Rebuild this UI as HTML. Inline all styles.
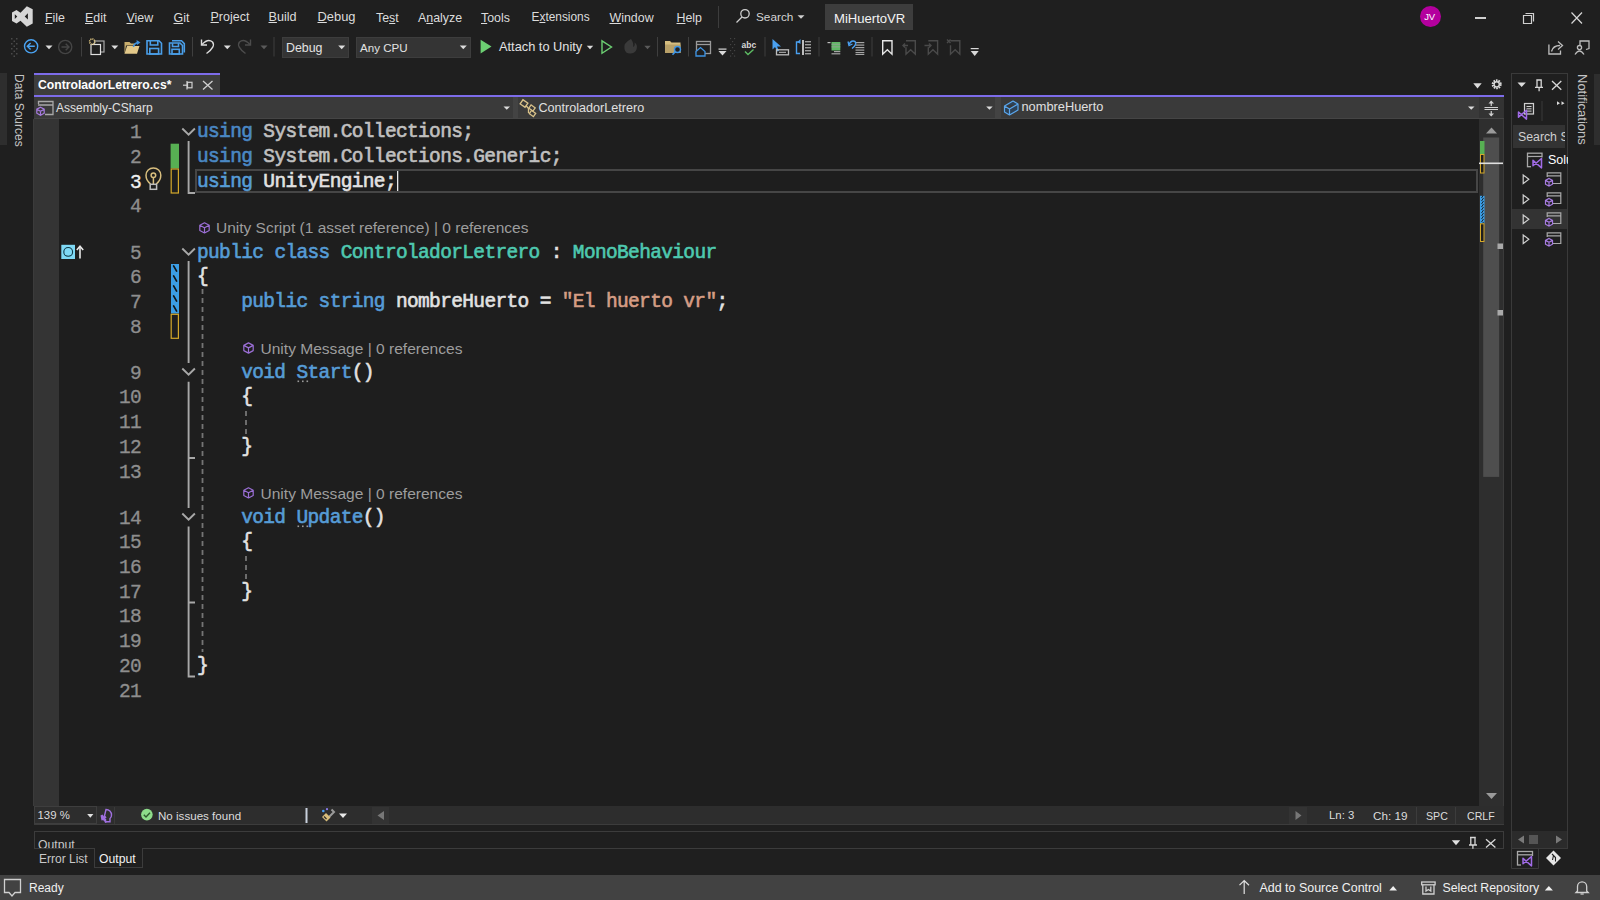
<!DOCTYPE html>
<html><head><meta charset="utf-8">
<style>
*{box-sizing:border-box;margin:0;padding:0}
html,body{width:1600px;height:900px;overflow:hidden;background:#1f1f1f;font-family:"Liberation Sans",sans-serif;color:#d6d6d6}
.a{position:absolute}
.t{position:absolute;white-space:pre;font-size:12.5px;line-height:16px;color:#d8d8d8}
.menu{top:9px}
.menu u{text-decoration:none;border-bottom:1px solid #bbb}
.sep{position:absolute;width:1px;background:#3d3d3d}
svg{position:absolute;overflow:visible}
/* code */
.ln{position:absolute;left:99px;width:42px;text-align:right;font:19.5px/24.7px "Liberation Mono",monospace;letter-spacing:-0.65px;color:#8e8e8e;-webkit-text-stroke:0.3px currentColor}
.ln.cur{color:#f0f0f0}
.cl{position:absolute;left:197px;white-space:pre;font:19.5px/24.7px "Liberation Mono",monospace;letter-spacing:-0.65px;color:#dcdcdc;-webkit-text-stroke:0.6px currentColor;margin-top:-1px}
.kw{color:#569cd6}.kwd{color:#4a88c4}.dim{color:#c0c0c0}.id{color:#e2e2e2}.ty{color:#4ec9b0}.st{color:#d69d85}.fn{color:#569cd6}
.lens{position:absolute;white-space:pre;font:15.5px/21.4px "Liberation Sans",sans-serif;color:#9d9d9d}
</style></head><body>
<div class="a" style="left:825px;top:4px;width:88px;height:26px;background:#3d3d3d;"></div>
<div class="a" style="left:1420px;top:6px;width:21px;height:21px;background:#b4009e;border-radius:50%;"></div>
<div class="a" style="left:1475px;top:17px;width:10.5px;height:1.5px;background:#d0d0d0;"></div>
<div class="a" style="left:718px;top:6px;width:1px;height:22px;background:#3d3d3d;"></div>
<div class="a" style="left:281.5px;top:36.5px;width:67.5px;height:21.5px;background:#343434;border:1px solid #3d3d3d;"></div>
<div class="a" style="left:356px;top:36.5px;width:115px;height:21.5px;background:#343434;border:1px solid #3d3d3d;"></div>
<div class="a" style="left:0px;top:73px;width:7px;height:72px;background:#2e2e2e;"></div>
<div class="a" style="left:34px;top:73px;width:186px;height:22px;background:#3d3d3d;border-top:2px solid #7d6cea;"></div>
<div class="a" style="left:34px;top:95px;width:1470px;height:2px;background:#7d6cea;"></div>
<div class="a" style="left:34px;top:97px;width:1470px;height:22px;background:#3a3a3a;border-bottom:1px solid #454545;"></div>
<div class="a" style="left:513px;top:97px;width:5px;height:21px;background:#434343;"></div>
<div class="a" style="left:995px;top:97px;width:6px;height:21px;background:#434343;"></div>
<div class="a" style="left:1479px;top:97px;width:25px;height:21px;background:#333333;"></div>
<div class="a" style="left:34px;top:119px;width:1445px;height:687px;background:#1e1e1e;"></div>
<div class="a" style="left:33px;top:119px;width:26px;height:687px;background:#343434;border-left:1px solid #3b3b3b;"></div>
<div class="a" style="left:1479px;top:119px;width:25px;height:687px;background:#2e2e2e;"></div>
<div class="a" style="left:195px;top:169px;width:1283px;height:24px;border:2px solid #464646;"></div>
<div class="a" style="left:34px;top:806px;width:1470px;height:19px;background:#2d2d2d;border-bottom:1px solid #3c3c3c;"></div>
<div class="a" style="left:34px;top:806px;width:63px;height:18px;background:#2d2d2d;border:1px solid #3e3e3e;"></div>
<div class="a" style="left:97px;top:807px;width:18px;height:17px;border-right:1px solid #3a3a3a;"></div>
<div class="a" style="left:372px;top:807px;width:17px;height:17px;background:#333333;"></div>
<div class="a" style="left:1289px;top:807px;width:18px;height:17px;background:#333333;"></div>
<div class="a" style="left:1416px;top:807px;width:40px;height:17px;border-left:1px solid #3c3c3c;border-right:1px solid #3c3c3c;"></div>
<div class="a" style="left:34px;top:831px;width:1470px;height:18px;border:1px solid #3c3c3c;border-bottom:none;"></div>
<div class="a" style="left:34px;top:848px;width:1470px;height:1px;background:#3c3c3c;"></div>
<div class="a" style="left:94px;top:848px;width:49px;height:20px;background:#1f1f1f;border:1px solid #3c3c3c;border-top:none;"></div>
<div class="a" style="left:1511px;top:73px;width:57px;height:776px;border:1px solid #3a3a3a;"></div>
<div class="a" style="left:1513px;top:125px;width:52px;height:23px;background:#333333;"></div>
<div class="a" style="left:1512px;top:209px;width:55px;height:20px;background:#333333;"></div>
<div class="a" style="left:1594px;top:73.5px;width:6px;height:71px;background:#2e2e2e;"></div>
<div class="a" style="left:0px;top:875px;width:1600px;height:25px;background:#424242;"></div>
<div class="t" style="left:45px;top:11.50px;font-size:12.4px;line-height:12.4px;color:#dcdcdc;"><u>F</u>ile</div>
<div class="t" style="left:85px;top:11.50px;font-size:12.4px;line-height:12.4px;color:#dcdcdc;"><u>E</u>dit</div>
<div class="t" style="left:126.5px;top:11.50px;font-size:12.4px;line-height:12.4px;color:#dcdcdc;"><u>V</u>iew</div>
<div class="t" style="left:173.5px;top:11.50px;font-size:12.4px;line-height:12.4px;color:#dcdcdc;"><u>G</u>it</div>
<div class="t" style="left:210.5px;top:11.42px;font-size:12.5px;line-height:12.5px;color:#dcdcdc;"><u>P</u>roject</div>
<div class="t" style="left:268.5px;top:11.33px;font-size:12.6px;line-height:12.6px;color:#dcdcdc;"><u>B</u>uild</div>
<div class="t" style="left:317.5px;top:11.08px;font-size:12.9px;line-height:12.9px;color:#dcdcdc;"><u>D</u>ebug</div>
<div class="t" style="left:376px;top:11.50px;font-size:12.4px;line-height:12.4px;color:#dcdcdc;">Te<u>s</u>t</div>
<div class="t" style="left:418px;top:11.50px;font-size:12.4px;line-height:12.4px;color:#dcdcdc;">A<u>n</u>alyze</div>
<div class="t" style="left:481px;top:11.50px;font-size:12.4px;line-height:12.4px;color:#dcdcdc;"><u>T</u>ools</div>
<div class="t" style="left:531.5px;top:11.93px;font-size:11.9px;line-height:11.9px;color:#dcdcdc;">E<u>x</u>tensions</div>
<div class="t" style="left:609.5px;top:11.50px;font-size:12.4px;line-height:12.4px;color:#dcdcdc;"><u>W</u>indow</div>
<div class="t" style="left:676.5px;top:11.50px;font-size:12.4px;line-height:12.4px;color:#dcdcdc;"><u>H</u>elp</div>
<div class="t" style="left:756px;top:11.61px;font-size:11.8px;line-height:11.8px;color:#d4d4d4;">Search</div>
<div class="t" style="left:834px;top:11.51px;font-size:13.1px;line-height:13.1px;color:#f4f4f4;">MiHuertoVR</div>
<div class="t" style="left:1424.3px;top:12.26px;font-size:9.5px;line-height:9.5px;color:#ffffff;letter-spacing:-0.3px;">JV</div>
<div class="t" style="left:286px;top:41.50px;font-size:12.4px;line-height:12.4px;color:#e2e2e2;">Debug</div>
<div class="t" style="left:360px;top:42.18px;font-size:11.6px;line-height:11.6px;color:#e2e2e2;">Any CPU</div>
<div class="t" style="left:499px;top:41.16px;font-size:12.8px;line-height:12.8px;color:#e2e2e2;">Attach to Unity</div>
<div class="t" style="left:25px;top:63.84px;font-size:12.0px;line-height:12.0px;color:#c4c4c4;transform:rotate(90deg);transform-origin:0 0;top:74px;">Data Sources</div>
<div class="t" style="left:38px;top:78.67px;font-size:12.2px;line-height:12.2px;color:#ffffff;font-weight:bold;">ControladorLetrero.cs*</div>
<div class="t" style="left:56px;top:102.14px;font-size:12.0px;line-height:12.0px;color:#e0e0e0;">Assembly-CSharp</div>
<div class="t" style="left:538.5px;top:101.63px;font-size:12.6px;line-height:12.6px;color:#e0e0e0;">ControladorLetrero</div>
<div class="t" style="left:1021.5px;top:101.46px;font-size:12.8px;line-height:12.8px;color:#e0e0e0;">nombreHuerto</div>
<div class="t" style="left:37.5px;top:810.05px;font-size:11.4px;line-height:11.4px;color:#dcdcdc;">139 %</div>
<div class="t" style="left:158px;top:809.88px;font-size:11.6px;line-height:11.6px;color:#dcdcdc;">No issues found</div>
<div class="t" style="left:1329px;top:810.05px;font-size:11.4px;line-height:11.4px;color:#dcdcdc;">Ln: 3</div>
<div class="t" style="left:1373px;top:809.80px;font-size:11.7px;line-height:11.7px;color:#dcdcdc;">Ch: 19</div>
<div class="t" style="left:1426px;top:810.73px;font-size:10.6px;line-height:10.6px;color:#dcdcdc;">SPC</div>
<div class="t" style="left:1467px;top:810.73px;font-size:10.6px;line-height:10.6px;color:#dcdcdc;">CRLF</div>
<div class="t" style="left:38px;top:838.87px;font-size:12.2px;line-height:12.2px;color:#c8c8c8;height:9.4px;overflow:hidden;">Output</div>
<div class="t" style="left:39px;top:852.84px;font-size:12.0px;line-height:12.0px;color:#c8c8c8;">Error List</div>
<div class="t" style="left:99px;top:852.67px;font-size:12.2px;line-height:12.2px;color:#f2f2f2;">Output</div>
<div class="t" style="left:1518px;top:131.39px;font-size:12.3px;line-height:12.3px;color:#d0d0d0;width:47px;overflow:hidden;">Search S</div>
<div class="t" style="left:1548px;top:153.92px;font-size:12.5px;line-height:12.5px;color:#ffffff;width:19.5px;overflow:hidden;">Solu</div>
<div class="t" style="left:1589px;top:62.80px;font-size:13.0px;line-height:13.0px;color:#c4c4c4;transform:rotate(90deg);transform-origin:0 0;top:73.8px;">Notifications</div>
<div class="t" style="left:29px;top:881.84px;font-size:12.0px;line-height:12.0px;color:#f0f0f0;">Ready</div>
<div class="t" style="left:1259.5px;top:881.76px;font-size:12.45px;line-height:12.45px;color:#f0f0f0;">Add to Source Control</div>
<div class="t" style="left:1442.5px;top:881.85px;font-size:12.35px;line-height:12.35px;color:#f0f0f0;">Select Repository</div><div class="ln" style="top:121.3px">1</div>
<div class="cl" style="top:121.3px"><span class="kwd">using</span> <span class="dim">System.Collections;</span></div>
<div class="ln" style="top:146.0px">2</div>
<div class="cl" style="top:146.0px"><span class="kwd">using</span> <span class="dim">System.Collections.Generic;</span></div>
<div class="ln cur" style="top:170.7px">3</div>
<div class="cl" style="top:170.7px"><span class="kw">using</span> <span class="id">UnityEngine;</span></div>
<div class="ln" style="top:195.4px">4</div>
<div class="ln" style="top:241.5px">5</div>
<div class="cl" style="top:241.5px"><span class="kw">public</span> <span class="kw">class</span> <span class="ty">ControladorLetrero</span> <span class="id">:</span> <span class="ty">MonoBehaviour</span></div>
<div class="ln" style="top:266.2px">6</div>
<div class="cl" style="top:266.2px"><span class="id">{</span></div>
<div class="ln" style="top:290.9px">7</div>
<div class="cl" style="top:290.9px">    <span class="kw">public</span> <span class="kw">string</span> <span class="id">nombreHuerto = </span><span class="st">"El huerto vr"</span><span class="id">;</span></div>
<div class="ln" style="top:315.6px">8</div>
<div class="ln" style="top:361.7px">9</div>
<div class="cl" style="top:361.7px">    <span class="kw">void</span> <span class="fn">Start</span><span class="id">()</span></div>
<div class="ln" style="top:386.4px">10</div>
<div class="cl" style="top:386.4px">    <span class="id">{</span></div>
<div class="ln" style="top:411.1px">11</div>
<div class="ln" style="top:435.8px">12</div>
<div class="cl" style="top:435.8px">    <span class="id">}</span></div>
<div class="ln" style="top:460.5px">13</div>
<div class="ln" style="top:506.6px">14</div>
<div class="cl" style="top:506.6px">    <span class="kw">void</span> <span class="fn">Update</span><span class="id">()</span></div>
<div class="ln" style="top:531.3px">15</div>
<div class="cl" style="top:531.3px">    <span class="id">{</span></div>
<div class="ln" style="top:556.0px">16</div>
<div class="ln" style="top:580.7px">17</div>
<div class="cl" style="top:580.7px">    <span class="id">}</span></div>
<div class="ln" style="top:605.4px">18</div>
<div class="ln" style="top:630.1px">19</div>
<div class="ln" style="top:654.8px">20</div>
<div class="cl" style="top:654.8px"><span class="id">}</span></div>
<div class="ln" style="top:679.5px">21</div>
<div class="t" style="left:216px;top:220.48px;font-size:15.5px;line-height:15.5px;color:#9d9d9d;">Unity Script (1 asset reference) <span class="bar">|</span> 0 references</div>
<div class="t" style="left:260.5px;top:340.64px;font-size:15.55px;line-height:15.55px;color:#9d9d9d;">Unity Message <span class="bar">|</span> 0 references</div>
<div class="t" style="left:260.5px;top:485.54px;font-size:15.55px;line-height:15.55px;color:#9d9d9d;">Unity Message <span class="bar">|</span> 0 references</div><svg style="left:0;top:0" width="1600" height="900" viewBox="0 0 1600 900">
<!-- title bar -->
<path d="M12 12.5 L16.5 10 L20.5 12.8 L26.8 6.3 L32.7 9.3 V23.6 L26.8 26.7 L20.5 20.8 L16.5 23.6 L12 21 Z M14.8 14.3 L17.3 16.6 L14.8 18.9 Z M27.9 13.3 V19.5 L24.7 16.4 Z" fill="#d6d6d6" fill-rule="evenodd"/>
<g fill="none" stroke="#cfcfcf" stroke-width="1.3">
<circle cx="745" cy="13.8" r="4.2"/><path d="M742 17 L736.5 22.5"/>
<path d="M1523.5 15.5 h8 v8 h-8 z" stroke="#d0d0d0" stroke-width="1.2"/>
<path d="M1525.5 13.5 h8 v8" stroke="#d0d0d0" stroke-width="1.2"/>
<path d="M1571.5 12.5 L1582 23.5 M1582 12.5 L1571.5 23.5" stroke="#d8d8d8" stroke-width="1.2"/>
</g>
<polygon points="797.5,15.3 804.5,15.3 801,18.8" fill="#cfcfcf"/>
<!-- toolbar grip -->
<g fill="#4a4a4a">
<rect x="11" y="38" width="1.5" height="1.5"/><rect x="16" y="38" width="1.5" height="1.5"/>
<rect x="13.5" y="40.5" width="1.5" height="1.5"/>
<rect x="11" y="43" width="1.5" height="1.5"/><rect x="16" y="43" width="1.5" height="1.5"/>
<rect x="13.5" y="45.5" width="1.5" height="1.5"/>
<rect x="11" y="48" width="1.5" height="1.5"/><rect x="16" y="48" width="1.5" height="1.5"/>
<rect x="13.5" y="50.5" width="1.5" height="1.5"/>
<rect x="11" y="53" width="1.5" height="1.5"/><rect x="16" y="53" width="1.5" height="1.5"/>
<rect x="13.5" y="55.5" width="1.5" height="1.5"/>
</g>
<!-- back / forward -->
<g fill="none" stroke-width="1.4">
<circle cx="31.1" cy="46.3" r="6.6" stroke="#4aa3f2"/>
<path d="M34.8 46.3 H27.5 M30.6 43 L27.3 46.3 L30.6 49.6" stroke="#4aa3f2"/>
<circle cx="65.2" cy="47" r="6.6" stroke="#454545"/>
<path d="M61.5 47 H68.8 M65.7 43.7 L69 47 L65.7 50.3" stroke="#454545"/>
</g>
<g fill="#dcdcdc">
<polygon points="45.5,45.6 52.5,45.6 49,49.2"/>
<polygon points="111.3,45.6 118.3,45.6 114.8,49.2"/>
<polygon points="223.8,45.6 230.8,45.6 227.3,49.2"/>
<polygon points="338.2,45.6 345.2,45.6 341.7,49.2"/>
<polygon points="459.8,45.6 466.8,45.6 463.3,49.2"/>
<polygon points="586.8,45.8 593.2,45.8 590,49.2"/>
</g>
<g fill="#5a5a5a">
<polygon points="260.5,45.6 267.5,45.6 264,49.2"/>
<polygon points="644.3,45.8 650.7,45.8 647.5,49.2"/>
</g>
<g fill="#3f3f3f">
<rect x="81" y="37" width="1" height="19.5"/>
<rect x="192" y="37" width="1" height="19.5"/>
<rect x="273.5" y="37" width="1" height="19.5"/>
<rect x="657" y="37" width="1" height="19.5"/>
<rect x="688" y="37" width="1" height="19.5"/>
<rect x="764.5" y="37" width="1" height="19.5"/>
<rect x="818.5" y="37" width="1" height="19.5"/>
<rect x="871.5" y="37" width="1" height="19.5"/>
</g>
<!-- new project -->
<g fill="none" stroke-width="1.2">
<rect x="94.5" y="41" width="9.5" height="11" stroke="#a8a8a8"/>
<rect x="91" y="44.5" width="9.5" height="10" stroke="#e0e0e0" fill="#1f1f1f"/>
</g>
<circle cx="92.2" cy="41.6" r="2.6" fill="none" stroke="#d9c07d" stroke-width="1.6" stroke-dasharray="1.2 0.8"/>
<!-- open folder -->
<path d="M124.5 42 h5 l1.5 1.5 h4 v2 h-9 l-1.5 8.5 z" fill="#c9ae6d"/>
<path d="M124.5 53.8 l2.5 -7.8 h12.5 l-2.5 7.8 z" fill="#e3c98a"/>
<path d="M133.5 47 q0.5 -4 5 -4.5" fill="none" stroke="#3e91de" stroke-width="1.5"/>
<polygon points="136.5,40 140.5,42.5 137,45" fill="#3e91de"/>
<!-- save -->
<g fill="none" stroke="#4a9fe9" stroke-width="1.6">
<path d="M147 40.8 h12 l2.5 2.5 v10.7 h-14.5 z"/>
<path d="M150.3 41 v4 h7.5 v-4"/>
<rect x="149.8" y="48.5" width="8.8" height="5.5"/>
<path d="M172 40.8 h9.5 l2.8 2.8 v9"/>
<path d="M169.5 43 h10.5 l2.5 2.5 v8.5 h-13 z"/>
<path d="M172.5 43.2 v3.3 h6 v-3.3"/>
<rect x="172" y="49.3" width="7.3" height="4.7"/>
</g>
<!-- undo redo -->
<g fill="none" stroke-width="1.4">
<path d="M202 44.5 Q208 38 212.5 42 Q216 46.5 206.5 53.5" stroke="#dcdcdc"/>
<path d="M201.5 39.5 V45 H207" stroke="#dcdcdc"/>
<path d="M250 44.5 Q244 38 239.5 42 Q236 46.5 245.5 53.5" stroke="#4c4c4c"/>
<path d="M250.5 39.5 V45 H245" stroke="#4c4c4c"/>
</g>
<!-- play -->
<polygon points="480.6,39.8 491.5,46.6 480.6,53.4" fill="#6ccf72"/>
<polygon points="602,40.8 611.5,47 602,53.3" fill="none" stroke="#6ccf72" stroke-width="1.4"/>
<path d="M631 39 q-8 4 -6.5 10 q1 4.5 5.5 4.5 q5 0 6.5 -4 q1.5 -5 -2 -7 q1 3 -1.5 4.5 q1 -4 -2 -8z" fill="#3a3a3a"/>
<!-- find in files -->
<path d="M665 41 h5 l1.5 1.5 h9 v10.5 h-15.5 z" fill="#d6bd7f"/>
<path d="M665 44.5 h15.5 v8.5 h-15.5 z" fill="#b8a068"/>
<circle cx="677.5" cy="49.5" r="3" fill="#1f1f1f" stroke="#3e94e4" stroke-width="1.4"/>
<path d="M675.3 51.8 L672.5 54.8" stroke="#3e94e4" stroke-width="1.6"/>
<!-- window home -->
<rect x="696.5" y="41.5" width="14" height="12" fill="none" stroke="#9a9a9a" stroke-width="1.3"/>
<path d="M696.5 44.5 h14" stroke="#9a9a9a" stroke-width="1.3"/>
<path d="M696 51.5 L700.5 47.5 L705 51.5 V56 H696 Z" fill="#1f1f1f" stroke="#3e94e4" stroke-width="1.3"/>
<!-- overflow small -->
<rect x="718.5" y="48.5" width="8" height="1.2" fill="#d8d8d8"/>
<polygon points="718.5,51 726.5,51 722.5,55.5" fill="#d8d8d8"/>
<g fill="#444">
<rect x="730" y="38" width="1.2" height="1.2"/><rect x="734" y="38" width="1.2" height="1.2"/>
<rect x="732" y="41" width="1.2" height="1.2"/>
<rect x="730" y="44" width="1.2" height="1.2"/><rect x="734" y="44" width="1.2" height="1.2"/>
<rect x="732" y="47" width="1.2" height="1.2"/>
<rect x="730" y="50" width="1.2" height="1.2"/><rect x="734" y="50" width="1.2" height="1.2"/>
<rect x="732" y="53" width="1.2" height="1.2"/>
<rect x="730" y="55.5" width="1.2" height="1.2"/><rect x="734" y="55.5" width="1.2" height="1.2"/>
</g>
<text x="741.5" y="48" font-family="Liberation Sans" font-weight="bold" font-size="8.5" fill="#d8d8d8">abc</text>
<path d="M745 51.5 L748 54.5 L753.5 49.5" fill="none" stroke="#5dbb63" stroke-width="1.4"/>
<!-- cursor icon -->
<path d="M772.5 39 V49.5 L775 47 L777.5 51.5 L779 50.8 L777 46.5 H781 Z" fill="#4aa0f0"/>
<rect x="776.5" y="49.8" width="12" height="5" fill="none" stroke="#bdbdbd" stroke-width="1.3"/>
<path d="M779 52.3 h7" stroke="#bdbdbd" stroke-width="1"/>
<!-- bracket doc -->
<path d="M800 42 h-3.5 v11.5 h3.5" fill="none" stroke="#4aa0f0" stroke-width="1.4"/>
<path d="M797.5 42 l3 -3 v5 z" fill="#4aa0f0"/>
<rect x="802" y="40" width="2" height="15" fill="#bdbdbd"/>
<g fill="#9c9c9c"><rect x="805" y="41" width="6" height="1.4"/><rect x="805" y="44" width="6" height="1.4"/><rect x="805" y="47" width="6" height="1.4"/><rect x="805" y="50" width="6" height="1.4"/><rect x="805" y="53" width="6" height="1.4"/></g>
<!-- comment / uncomment -->
<rect x="827.5" y="42" width="3" height="1.2" fill="#bdbdbd"/>
<rect x="831.5" y="42" width="8.8" height="8.5" fill="#5fb865"/>
<g fill="#9c9c9c"><rect x="831.5" y="43.8" width="8.8" height="0.8"/><rect x="831.5" y="46.5" width="8.8" height="0.8"/></g>
<g fill="#a5a5a5"><rect x="834" y="51" width="6.3" height="1.2"/><rect x="831.5" y="53.2" width="8.8" height="1.2"/></g>
<g fill="#a5a5a5"><rect x="855.5" y="42" width="8.8" height="1.2"/><rect x="855.5" y="44.5" width="8.8" height="1.2"/><rect x="855.5" y="47" width="8.8" height="1.2"/><rect x="855.5" y="49.5" width="8.8" height="1.2"/><rect x="855.5" y="52" width="8.8" height="1.2"/><rect x="855.5" y="54" width="8.8" height="1"/></g>
<path d="M849 44.5 Q851.5 39.5 855 41.5 Q857.5 44 852 48.5" fill="none" stroke="#4aa0f0" stroke-width="1.5"/>
<path d="M848 41.5 L849 45.5 L852.5 44" fill="none" stroke="#4aa0f0" stroke-width="1.3"/>
<!-- bookmarks -->
<path d="M882.7 40.7 h9.3 v13.5 l-4.65 -4.5 l-4.65 4.5 z" fill="none" stroke="#e6e6e6" stroke-width="1.4"/>
<g fill="none" stroke="#4a4a4a" stroke-width="1.4">
<path d="M906 40.7 h9.3 v13.5 l-4.65 -4.5 l-4.65 4.5 v-7 M903 45.5 h5 M905 43.5 l-2 2 l2 2"/>
<path d="M928.3 40.7 h9.3 v13.5 l-4.65 -4.5 l-4.65 4.5 v-7 M924.5 45.5 h6 M929 43.5 l2 2 l-2 2"/>
<path d="M950.5 40.7 h9.3 v13.5 l-4.65 -4.5 l-4.65 4.5 v-9 M947 39.5 l3.5 3.5 M950.5 39.5 l-3.5 3.5"/>
</g>
<rect x="970.7" y="48" width="8" height="1.2" fill="#d8d8d8"/>
<polygon points="970.7,51 978.7,51 974.7,56" fill="#d8d8d8"/>
<!-- share / feedback -->
<g fill="none" stroke="#bdbdbd" stroke-width="1.3">
<path d="M1548.9 44.5 V54 H1560.5 V50.5"/>
<path d="M1551.5 51.5 Q1553 45.5 1560 45.5"/>
<path d="M1558 41.5 L1562.5 45.5 L1558 49.5"/>
<path d="M1580 45.5 V41 H1589 V48.5 L1586 49.5"/>
<circle cx="1579.5" cy="47.6" r="2.1"/>
<path d="M1575 54.5 Q1579.5 47.5 1584 54.5"/>
</g>
</svg>
<svg style="left:0;top:0" width="1600" height="900" viewBox="0 0 1600 900">
<!-- tab pin / close -->
<g fill="none" stroke="#d0d0d0" stroke-width="1.2">
<path d="M183 85.2 H187"/><path d="M187 81 V89.5"/><rect x="187.5" y="82.3" width="4.5" height="5.5"/>
<path d="M203 81 L212.5 89.5 M212.5 81 L203 89.5" stroke-width="1.3"/>
</g>
<polygon points="1473.3,83.3 1481.7,83.3 1477.5,88.6" fill="#dcdcdc"/>
<circle cx="1496.7" cy="84.3" r="3.9" fill="none" stroke="#d8d8d8" stroke-width="2.2" stroke-dasharray="1.6 0.85"/>
<circle cx="1496.7" cy="84.3" r="2.6" fill="none" stroke="#d8d8d8" stroke-width="1.4"/>
<!-- nav bar icons -->
<g fill="#dcdcdc">
<polygon points="503.5,106.6 510,106.6 506.75,109.8"/>
<polygon points="986.2,106.6 992.7,106.6 989.45,109.8"/>
<polygon points="1468,106.6 1474.5,106.6 1471.25,109.8"/>
</g>
<g fill="none" stroke="#a8a8a8" stroke-width="1.3">
<path d="M42 101.5 H53 V114.5 H45"/><path d="M38.5 104 V101.5 H42 M38 105 H53"/>
</g>
<path d="M40.5 107.2 L44.2 109.2 V113.2 L40.5 115.2 L36.8 113.2 V109.2 Z M36.8 109.2 L40.5 111.2 L44.2 109.2 M40.5 111.2 V115.2" fill="#3a3a3a" stroke="#a77be0" stroke-width="1.2"/>
<!-- class icon -->
<g fill="none" stroke="#d9c28a" stroke-width="1.3">
<rect x="521" y="101" width="6" height="5" transform="rotate(35 524 103.5)"/>
<rect x="529.5" y="106" width="5" height="4" transform="rotate(35 532 108)"/>
<rect x="530" y="111.5" width="5" height="4" transform="rotate(35 532.5 113.5)"/>
<path d="M526 105.5 L528.5 108.5 V113"/>
</g>
<!-- field icon -->
<path d="M1004.5 106 L1013 101 L1018 104 L1018 110 L1009.5 115 L1004.5 112 Z M1004.5 106 L1009.5 109 L1018 104 M1009.5 109 V115" fill="#2d4257" stroke="#5aa6ec" stroke-width="1.2" stroke-linejoin="round"/>
<!-- split -->
<g fill="none" stroke="#d0d0d0" stroke-width="1.2">
<path d="M1484.5 107.5 H1498 M1484.5 109.5 H1498 M1491.25 101 V106 M1491.25 111 V116"/>
</g>
<polygon points="1488.5,103.5 1494,103.5 1491.25,100.5" fill="#d0d0d0"/>
<polygon points="1488.5,113.5 1494,113.5 1491.25,116.5" fill="#d0d0d0"/>

<!-- glyph margin bookmark-ish icon line5 -->
<rect x="61.3" y="244.8" width="13.7" height="14.2" fill="#7fd9f5"/>
<circle cx="68.2" cy="251.9" r="4.4" fill="none" stroke="#0f3a48" stroke-width="1.1"/>
<path d="M80 258.5 V247" stroke="#e8e8e8" stroke-width="1.6"/>
<path d="M76.8 250 L80 246.3 L83.2 250" fill="none" stroke="#e8e8e8" stroke-width="1.6"/>
<!-- lightbulb -->
<g fill="none" stroke="#d8be7e" stroke-width="1.5">
<path d="M150.6 184 Q146 180.5 146 175.3 A7.4 7.4 0 0 1 160.8 175.3 Q160.8 180.5 156.2 184"/>
<circle cx="153.4" cy="175.3" r="2.3"/>
<path d="M153.4 177.6 V184"/>
</g>
<rect x="150.2" y="184.3" width="6.4" height="5" fill="#1e1e1e" stroke="#bdbdbd" stroke-width="1.5"/>
<!-- change bars -->
<rect x="170.6" y="143.7" width="8.4" height="24.7" fill="#57b053"/>
<rect x="171.2" y="169" width="7.2" height="24" fill="#1e1e1e" stroke="#d4a82a" stroke-width="1.2"/>
<defs>
<pattern id="hatch" width="8.4" height="6" patternUnits="userSpaceOnUse">
<rect width="8.4" height="6" fill="#3b9ee6"/>
<path d="M1.8 6.3 L6.2 -0.3" stroke="#16242e" stroke-width="2.2"/>
</pattern>
<pattern id="hatch2" width="5" height="3" patternUnits="userSpaceOnUse">
<rect width="5" height="3" fill="#3b9ee6"/>
<path d="M1.5 3 L3.5 0" stroke="#16242e" stroke-width="1"/>
</pattern>
</defs>
<rect x="171" y="264" width="8" height="49.5" fill="#3b9ee6"/>
<g stroke="#141414" stroke-width="1.7" stroke-linecap="round"><path d="M173.6 265.9 L176.6 271.1"/><path d="M173.6 275.9 L176.6 281.1"/><path d="M173.6 285.9 L176.6 291.1"/><path d="M173.6 295.9 L176.6 301.1"/><path d="M173.6 305.9 L176.6 311.1"/></g>
<rect x="171.2" y="314.3" width="7.2" height="24" fill="#1e1e1e" stroke="#d4a82a" stroke-width="1.2"/>
<!-- fold markers -->
<g fill="none" stroke="#a8a8a8" stroke-width="1.9">
<path d="M182.3 128.5 L188.6 134.7 L194.9 128.5"/>
<path d="M188.6 141 V193 H195"/>
<path d="M182.3 248.5 L188.6 254.7 L194.9 248.5"/>
<path d="M188.6 261 V363"/>
<path d="M182.3 368.5 L188.6 374.7 L194.9 368.5"/>
<path d="M188.6 381.7 V508 M188.6 458 H195"/>
<path d="M182.3 513.5 L188.6 519.7 L194.9 513.5"/>
<path d="M188.6 526.5 V676.5 H195 M188.6 602.5 H195"/>
</g>
<!-- indent guides -->
<g stroke="#757575" stroke-width="1.8" stroke-dasharray="5 4">
<path d="M202.5 289 V652"/>
<path d="M246 411 V436"/>
<path d="M246 556 V581"/>
</g>
<!-- squiggle dots under Start / Update -->
<g fill="#9a9a9a">
<rect x="297.5" y="380.5" width="1.6" height="1.6"/><rect x="302" y="380.5" width="1.6" height="1.6"/><rect x="306.5" y="380.5" width="1.6" height="1.6"/>
<rect x="297.5" y="525.5" width="1.6" height="1.6"/><rect x="302" y="525.5" width="1.6" height="1.6"/><rect x="306.5" y="525.5" width="1.6" height="1.6"/>
</g>
<!-- caret -->
<rect x="397" y="171" width="1.3" height="20" fill="#e8e8e8"/>
<!-- codelens cubes -->
<g fill="none" stroke="#9b6fd6" stroke-width="1.2" stroke-linejoin="round">
<path d="M204.5 222.8 L209.2 225.3 V230.5 L204.5 233 L199.8 230.5 V225.3 Z M199.8 225.3 L204.5 227.8 L209.2 225.3 M204.5 227.8 V233"/>
<path d="M248.5 342.9 L253.2 345.4 V350.6 L248.5 353.1 L243.8 350.6 V345.4 Z M243.8 345.4 L248.5 347.9 L253.2 345.4 M248.5 347.9 V353.1"/>
<path d="M248.5 487.8 L253.2 490.3 V495.5 L248.5 498 L243.8 495.5 V490.3 Z M243.8 490.3 L248.5 492.8 L253.2 490.3 M248.5 492.8 V498"/>
</g>

<!-- vertical scrollbar -->
<polygon points="1486,133.5 1497,133.5 1491.5,127.5" fill="#9a9a9a"/>
<polygon points="1486,793 1497,793 1491.5,799" fill="#9a9a9a"/>
<rect x="1483.2" y="137.5" width="16" height="339.4" fill="#4e4e4e"/>
<rect x="1480" y="141" width="4.5" height="13" fill="#57b053"/>
<rect x="1480.5" y="154.5" width="3.5" height="18.5" fill="#1e1e1e" stroke="#d4a82a" stroke-width="1"/>
<rect x="1480" y="195.8" width="4.5" height="27.5" fill="url(#hatch2)"/>
<rect x="1480.5" y="223.8" width="3.5" height="17.7" fill="#1e1e1e" stroke="#d4a82a" stroke-width="1"/>
<rect x="1479" y="162.5" width="24.5" height="1.6" fill="#e0e0e0"/>
<rect x="1497.5" y="243.5" width="5.5" height="5.5" fill="#a9a9a9"/>
<rect x="1497.5" y="310" width="5.5" height="5.5" fill="#a9a9a9"/>
</svg>
<svg style="left:0;top:0" width="1600" height="900" viewBox="0 0 1600 900">
<!-- editor right border -->
<rect x="1503" y="119" width="1" height="687" fill="#3a3a3a"/>
<!-- solution explorer header -->
<polygon points="1517.5,82.5 1525.8,82.5 1521.65,87" fill="#dcdcdc"/>
<g fill="none" stroke="#d8d8d8" stroke-width="1.3">
<path d="M1536.3 80 h5.5 M1537 80 v7 M1541.2 80 v7 M1535 87.3 h8 M1539.1 87.3 v4"/>
<path d="M1552 81 L1561.3 89.8 M1561.3 81 L1552 89.8"/>
</g>
<!-- toolbar icon -->
<rect x="1524.5" y="103.5" width="9" height="10.5" fill="#2a2a2a" stroke="#cfcfcf" stroke-width="1.2"/>
<g fill="#cfcfcf"><rect x="1526.5" y="106" width="5" height="1"/><rect x="1526.5" y="108.3" width="5" height="1"/><rect x="1526.5" y="110.6" width="5" height="1"/></g>
<path d="M1518.5 112.06 L1526.5 119.10 V110.30 L1518.5 117.16 Z" fill="none" stroke="#a06be6" stroke-width="1.5" stroke-linejoin="round"/>
<rect x="1541.5" y="101" width="1" height="20" fill="#3a3a3a"/>
<g fill="#dcdcdc"><polygon points="1557,101.3 1560,103.2 1557,105.1"/><polygon points="1561.5,101.3 1564.5,103.2 1561.5,105.1"/></g>
<!-- solution row -->
<rect x="1527.5" y="153.2" width="14.5" height="13.5" fill="none" stroke="#a8a8a8" stroke-width="1.3"/>
<path d="M1527.5 156.5 h14.5" stroke="#a8a8a8" stroke-width="1.3"/>
<rect x="1531" y="157.5" width="12" height="12" fill="#1f1f1f"/><path d="M1533 160.37 L1541.5 167.85 V158.50 L1533 165.79 Z" fill="none" stroke="#a06be6" stroke-width="1.5" stroke-linejoin="round"/>
<!-- tree rows -->
<g id="row1">
<polygon points="1523.2,175 1528.8,179.3 1523.2,183.6" fill="none" stroke="#cfcfcf" stroke-width="1.2"/>
<path d="M1547.2 177 V172.8 H1560.8 V183.5 H1553 M1547.2 175.8 H1560.8" fill="none" stroke="#a8a8a8" stroke-width="1.2"/>
<path d="M1549 178.5 L1552.5 180.4 V184.2 L1549 186.1 L1545.5 184.2 V180.4 Z M1545.5 180.4 L1549 182.3 L1552.5 180.4 M1549 182.3 V186.1" fill="#1f1f1f" stroke="#a77be0" stroke-width="1.2"/>
</g>
<use href="#row1" y="20"/>
<use href="#row1" y="40"/>
<use href="#row1" y="60"/>
<!-- h scroll -->
<rect x="1512" y="831" width="55" height="17" fill="#2b2b2b"/>
<polygon points="1524,835.5 1524,843.5 1518,839.5" fill="#7a7a7a"/>
<rect x="1529" y="835" width="9" height="9" fill="#555"/>
<polygon points="1556,835.5 1556,843.5 1562,839.5" fill="#7a7a7a"/>
<!-- bottom tabs of right panel -->
<path d="M1511.5 848 V868.5 H1538.5 V848" fill="none" stroke="#3a3a3a" stroke-width="1"/>
<rect x="1517.5" y="851.5" width="15" height="13.5" fill="none" stroke="#a8a8a8" stroke-width="1.3"/>
<path d="M1517.5 854.8 h15" stroke="#a8a8a8" stroke-width="1.3"/>
<rect x="1521" y="856" width="13" height="12" fill="#1f1f1f"/><path d="M1523 858.37 L1531.5 865.85 V856.50 L1523 863.79 Z" fill="none" stroke="#a06be6" stroke-width="1.5" stroke-linejoin="round"/>
<path d="M1553.5 850.5 L1561 858 L1553.5 865.5 L1546 858 Z" fill="#e6e6e6"/>
<path d="M1552 854 L1555.5 857.5 V861.5 M1553.5 855.5 l-1 4.5" stroke="#1f1f1f" stroke-width="1.1" fill="none"/>
</svg>
<svg style="left:0;top:0" width="1600" height="900" viewBox="0 0 1600 900">
<!-- editor status bar -->
<polygon points="87.2,814 93.4,814 90.3,817.8" fill="#e0e0e0"/>
<g fill="#a070e0">
<path d="M106 809.5 a5.5 5.5 0 0 1 5.5 5.5 q0 2.5 -1.5 3.5 v3.3 h-4.5 v-2 h-1.5 v-2 z" fill="none" stroke="#a070e0" stroke-width="1.4"/>
<path d="M100.5 815.5 l2 -1 l1.5 2 l1.5 -0.5 l1 1.5 l-1.5 1.5 l2 3 l-1.5 1 l-2 -3 l-2 0.5 z"/>
</g>
<circle cx="146.9" cy="814.6" r="5.8" fill="#8ddc8a"/>
<path d="M143.8 814.8 L146 817 L150 812.8" fill="none" stroke="#2f5a2f" stroke-width="1.4"/>
<rect x="305.5" y="808" width="2" height="15" fill="#c8d0dc"/>
<path d="M331.5 809.5 L334 812 L328 818" stroke="#9a9a9a" stroke-width="2" fill="none"/>
<path d="M322 817 L326 813 L330.5 817.5 L326.5 821.5 Z" fill="#d8bd7a"/>
<path d="M324 816.5 l2.5 2.5" stroke="#2d2d2d" stroke-width="1.2"/>
<circle cx="323.3" cy="811" r="1.3" fill="#4a9ff5"/>
<circle cx="327" cy="809.2" r="1.1" fill="#8a7cf0"/>
<polygon points="339,813.5 347,813.5 343,818" fill="#e8e8e8"/>
<polygon points="384,811 384,820 377.5,815.5" fill="#777"/>
<polygon points="1295.5,811 1295.5,820 1301.5,815.5" fill="#777"/>
<!-- output panel buttons -->
<polygon points="1451.8,840.3 1460.2,840.3 1456,845.3" fill="#e0e0e0"/>
<g fill="none" stroke="#d8d8d8" stroke-width="1.3">
<path d="M1470 837.5 h5.8 M1470.8 837.5 v7 M1475 837.5 v7 M1469 845 h8 M1472.9 845 v3.7"/>
<path d="M1486 839.3 L1495.4 847.5 M1495.4 839.3 L1486 847.5"/>
</g>
<!-- status bar -->
<path d="M4.5 879.5 H20.5 V892.5 H15 L12 896 L9 892.5 H4.5 Z" fill="none" stroke="#d0d0d0" stroke-width="1.3"/>
<path d="M1244.2 880.5 V894 M1239.5 885.2 L1244.2 880.5 L1249 885.2" fill="none" stroke="#e0e0e0" stroke-width="1.2"/>
<polygon points="1389.3,890.5 1397,890.5 1393.15,886" fill="#f0f0f0"/>
<g fill="none" stroke="#d0d0d0" stroke-width="1.3">
<rect x="1421.7" y="882" width="13.4" height="2.8"/>
<path d="M1422.8 884.8 V894 H1434 V884.8"/>
<path d="M1426 886.5 V891 L1428.4 889.5 L1430.8 891 V886.5"/>
</g>
<polygon points="1544.8,890.5 1552.9,890.5 1548.85,886" fill="#f0f0f0"/>
<g fill="none" stroke="#d0d0d0" stroke-width="1.3">
<path d="M1577.5 891 V886.5 a4.6 4.6 0 0 1 9.2 0 V891 l1.5 1.5 H1576 z"/>
<path d="M1580.5 894 h3.2"/>
</g>
</svg>
</body></html>
